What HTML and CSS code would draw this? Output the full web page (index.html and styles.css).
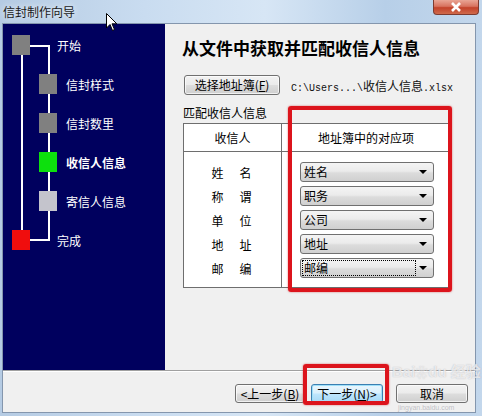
FILE: index.html
```html
<!DOCTYPE html>
<html lang="zh-CN">
  <head>
    <meta charset="UTF-8" />
    <meta name="viewport" content="width=device-width, initial-scale=1.0" />
    <title>信封制作向导</title>
    <link rel="stylesheet" href="styles.css">
  </head>
  <body>
    <div class="window">
      <div class="titlebar">
        <span class="title">信封制作向导</span>
        <div class="close-btn">
          <svg width="14" height="10" viewBox="0 0 14 10">
            <path d="M3 1 L11 9 M11 1 L3 9" stroke="#fff" stroke-width="2.6" />
          </svg>
        </div>
      </div>

      <div class="client">
        <div class="main">
          <!-- wizard steps on the left -->
          <div class="steps">
            <div class="line outer"></div>
            <div class="line start-h"></div>
            <div class="line inner"></div>
            <div class="line end-h"></div>

            <div class="step">
              <span class="box gray"></span><span>开始</span>
            </div>
            <div class="step sub">
              <span class="box gray"></span><span>信封样式</span>
            </div>
            <div class="step sub">
              <span class="box gray"></span><span>信封数里</span>
            </div>
            <div class="step sub current">
              <span class="box green"></span><span>收信人信息</span>
            </div>
            <div class="step sub">
              <span class="box light"></span><span>寄信人信息</span>
            </div>
            <div class="step">
              <span class="box red"></span><span>完成</span>
            </div>
          </div>

          <!-- page content -->
          <div class="page">
            <h1>从文件中获取并匹配收信人信息</h1>
            <div class="picker">
              <button class="btn">选择地址簿(<u>F</u>)</button>
              <span class="path">C:\Users...\<span class="cjk">收信人信息</span>.xlsx</span>
            </div>
            <div class="group-label">匹配收信人信息</div>
            <div class="map">
              <div class="map-head left">收信人</div>
              <div class="map-head">地址簿中的对应项</div>
              <div class="map-col left">
                <div class="field"><span>姓</span><span>名</span></div>
                <div class="field"><span>称</span><span>谓</span></div>
                <div class="field"><span>单</span><span>位</span></div>
                <div class="field"><span>地</span><span>址</span></div>
                <div class="field"><span>邮</span><span>编</span></div>
              </div>
              <div class="map-col">
                <div class="combo"><span class="combo-text">姓名</span><span class="arrow"></span></div>
                <div class="combo"><span class="combo-text">职务</span><span class="arrow"></span></div>
                <div class="combo"><span class="combo-text">公司</span><span class="arrow"></span></div>
                <div class="combo"><span class="combo-text">地址</span><span class="arrow"></span></div>
                <div class="combo focus"><span class="combo-text">邮编</span><span class="arrow"></span></div>
              </div>
            </div>
          </div>
        </div>

        <div class="footer">
          <button class="btn nav">&lt;上一步(<u>B</u>)</button>
          <button class="btn nav default">下一步(<u>N</u>)&gt;</button>
          <button class="btn nav cancel">取消</button>
        </div>
      </div>

      <!-- annotations over the screenshot -->
      <div class="mark mark-map"></div>
      <div class="mark mark-next"></div>
      <div class="watermark">Bai<span class="paw">&#x2740;</span>du 经验</div>
      <div class="watermark-url">jingyan.baidu.com</div>
      <svg class="cursor" width="12" height="19" viewBox="0 0 12 19">
        <path d="M0.5 0.5 L0.5 15 L4 11.5 L6.5 17.5 L8.5 16.5 L6 10.8 L10.8 10.8 Z" fill="#fff" stroke="#000" stroke-width="1" />
      </svg>
    </div>
  </body>
</html>
```

FILE: styles.css
```css
body,
h1,
button {
  margin: 0;
  padding: 0;
  box-sizing: border-box;
}

* {
  box-sizing: border-box;
}

body {
  width: 482px;
  height: 416px;
  overflow: hidden;
  font-family: "Noto Sans CJK SC", "Liberation Sans", sans-serif;
  font-size: 12px;
  color: #000;
}

.window {
  position: relative;
  width: 482px;
  height: 416px;
  display: flex;
  flex-direction: column;
  background: linear-gradient(90deg, #b5cbe3 0%, #c9dcf0 30%, #d7e6f5 55%, #b7cfe8 80%, #c3d7ec 100%);
}

.titlebar {
  height: 23px;
  display: flex;
  justify-content: space-between;
  align-items: flex-start;
  padding: 0 3px 0 3px;
}

.title {
  line-height: 23px;
  font-size: 12px;
  color: #1a1a1a;
  text-shadow: 0 0 6px #fff;
}

.close-btn {
  width: 46px;
  height: 15px;
  display: flex;
  align-items: center;
  justify-content: center;
  border: 1px solid #7e3b30;
  border-top: none;
  border-radius: 0 0 4px 4px;
  background: linear-gradient(#e9a595 0%, #d8735f 45%, #c3422a 55%, #cf6a4c 100%);
}

.client {
  flex: 1;
  margin: 0 6px 3px 2px;
  border: 1px solid #8496ad;
  background-color: #f0f0f0;
  display: flex;
  flex-direction: column;
}

.main {
  height: 346px;
  display: flex;
}

/* steps panel */
.steps {
  position: relative;
  width: 162px;
  background-color: #00005e;
  padding-top: 11px;
  color: #fff;
}

.line {
  position: absolute;
  background-color: #fff;
}

.line.outer {
  left: 18px;
  top: 20px;
  width: 2px;
  height: 196px;
}

.line.start-h {
  left: 27px;
  top: 21px;
  width: 20px;
  height: 2px;
}

.line.inner {
  left: 45px;
  top: 21px;
  width: 2px;
  height: 196px;
}

.line.end-h {
  left: 27px;
  top: 215px;
  width: 20px;
  height: 2px;
}

.step {
  position: relative;
  display: flex;
  align-items: center;
  height: 20px;
  margin-bottom: 19px;
  padding-left: 9px;
  gap: 27px;
  font-size: 12px;
}

.step.sub {
  padding-left: 36px;
  gap: 9px;
}

.step.current {
  font-weight: bold;
}

.box {
  width: 18px;
  height: 20px;
  flex-shrink: 0;
}

.box.gray {
  background-color: #808080;
}

.box.green {
  background-color: #0de00d;
}

.box.light {
  background-color: #c4c4cc;
}

.box.red {
  background-color: #f00d0d;
}

/* page */
.page {
  flex: 1;
  padding: 14px 0 0 18px;
}

.page h1 {
  font-size: 17px;
  line-height: 20px;
  font-weight: bold;
  margin-left: -1px;
}

.picker {
  margin-top: 17px;
  display: flex;
  align-items: center;
  gap: 11px;
}

.btn {
  font-family: "Noto Sans CJK SC", "Liberation Sans", sans-serif;
  font-size: 12px;
  color: #000;
  height: 20px;
  border: 1px solid #707070;
  border-radius: 3px;
  background: linear-gradient(#f2f2f2 0%, #ebebeb 48%, #dddddd 52%, #cfcfcf 100%);
  box-shadow: inset 0 0 0 1px rgba(255, 255, 255, 0.7);
  line-height: 16px;
}

.picker .btn {
  width: 96px;
  margin-left: 1px;
}

.path {
  font-family: "Liberation Mono", "Noto Sans CJK SC", monospace;
  font-size: 10px;
  color: #111;
}

.path .cjk {
  font-family: "Noto Sans CJK SC", sans-serif;
  font-size: 12px;
}

.group-label {
  margin-top: 11px;
  line-height: 14px;
}

.map {
  margin-top: 3px;
  width: 268px;
  height: 165px;
  display: grid;
  grid-template-columns: 98px 1fr;
  grid-template-rows: 28px 1fr;
  border: 1px solid #6e6e6e;
  background-color: #fff;
}

.map-head {
  border-bottom: 1px solid #6e6e6e;
  display: flex;
  align-items: center;
  justify-content: center;
}

.left {
  border-right: 1px solid #6e6e6e;
}

.map-col {
  display: flex;
  flex-direction: column;
  gap: 4px;
  padding-top: 10px;
}

.field {
  height: 20px;
  display: flex;
  align-items: center;
  justify-content: center;
  gap: 16px;
  padding-right: 2px;
}

.combo {
  width: 134px;
  height: 20px;
  margin-left: 18px;
  display: flex;
  align-items: center;
  justify-content: space-between;
  padding: 0 6px 0 2px;
  border: 1px solid #707070;
  border-radius: 3px;
  background: linear-gradient(#f4f4f4 0%, #ebebeb 45%, #dcdcdc 55%, #d0d0d0 100%);
}

.combo-text {
  line-height: 14px;
  padding: 0 1px;
}

.combo.focus .combo-text {
  outline: 1px dotted #000;
  width: 112px;
}

.arrow {
  width: 0;
  height: 0;
  border-left: 4px solid transparent;
  border-right: 4px solid transparent;
  border-top: 4px solid #000;
}

/* buttons row */
.footer {
  flex: 1;
  border-top: 1px solid #a0a0a0;
  box-shadow: inset 0 1px 0 #fff;
  display: flex;
  justify-content: flex-end;
  align-items: flex-start;
  padding: 13px 7px 0 0;
}

.btn.nav {
  width: 70px;
  height: 19px;
  line-height: 15px;
}

.btn.default {
  width: 72px;
  margin-left: 6px;
  border-color: #3c7fb1;
  background: linear-gradient(#eaf6fd 0%, #d9f0fc 48%, #bee6fd 52%, #a7d9f5 100%);
  box-shadow: inset 0 0 0 1px #9ee0f9;
}

.btn.cancel {
  width: 72px;
  margin-left: 13px;
}

/* red annotations */
.mark {
  position: absolute;
  border: 4px solid #dc141c;
  border-radius: 3px;
  box-shadow: 0 0 2px rgba(200, 0, 0, 0.6);
}

.mark-map {
  left: 288px;
  top: 106px;
  width: 164px;
  height: 186px;
}

.mark-next {
  left: 303px;
  top: 364px;
  width: 86px;
  height: 41px;
}

/* faint site watermark */
.watermark {
  position: absolute;
  left: 392px;
  top: 362px;
  font-family: "Liberation Sans", "Noto Sans CJK SC", sans-serif;
  font-size: 15px;
  font-weight: bold;
  line-height: 20px;
  color: rgba(255, 255, 255, 0.7);
  text-shadow: 0 0 1px rgba(120, 120, 130, 0.5);
}

.paw {
  font-size: 13px;
}

.watermark-url {
  position: absolute;
  left: 398px;
  top: 404px;
  font-family: "Liberation Sans", sans-serif;
  font-size: 7px;
  line-height: 8px;
  color: rgba(160, 160, 170, 0.6);
}

.cursor {
  position: absolute;
  left: 106px;
  top: 13px;
}
```
